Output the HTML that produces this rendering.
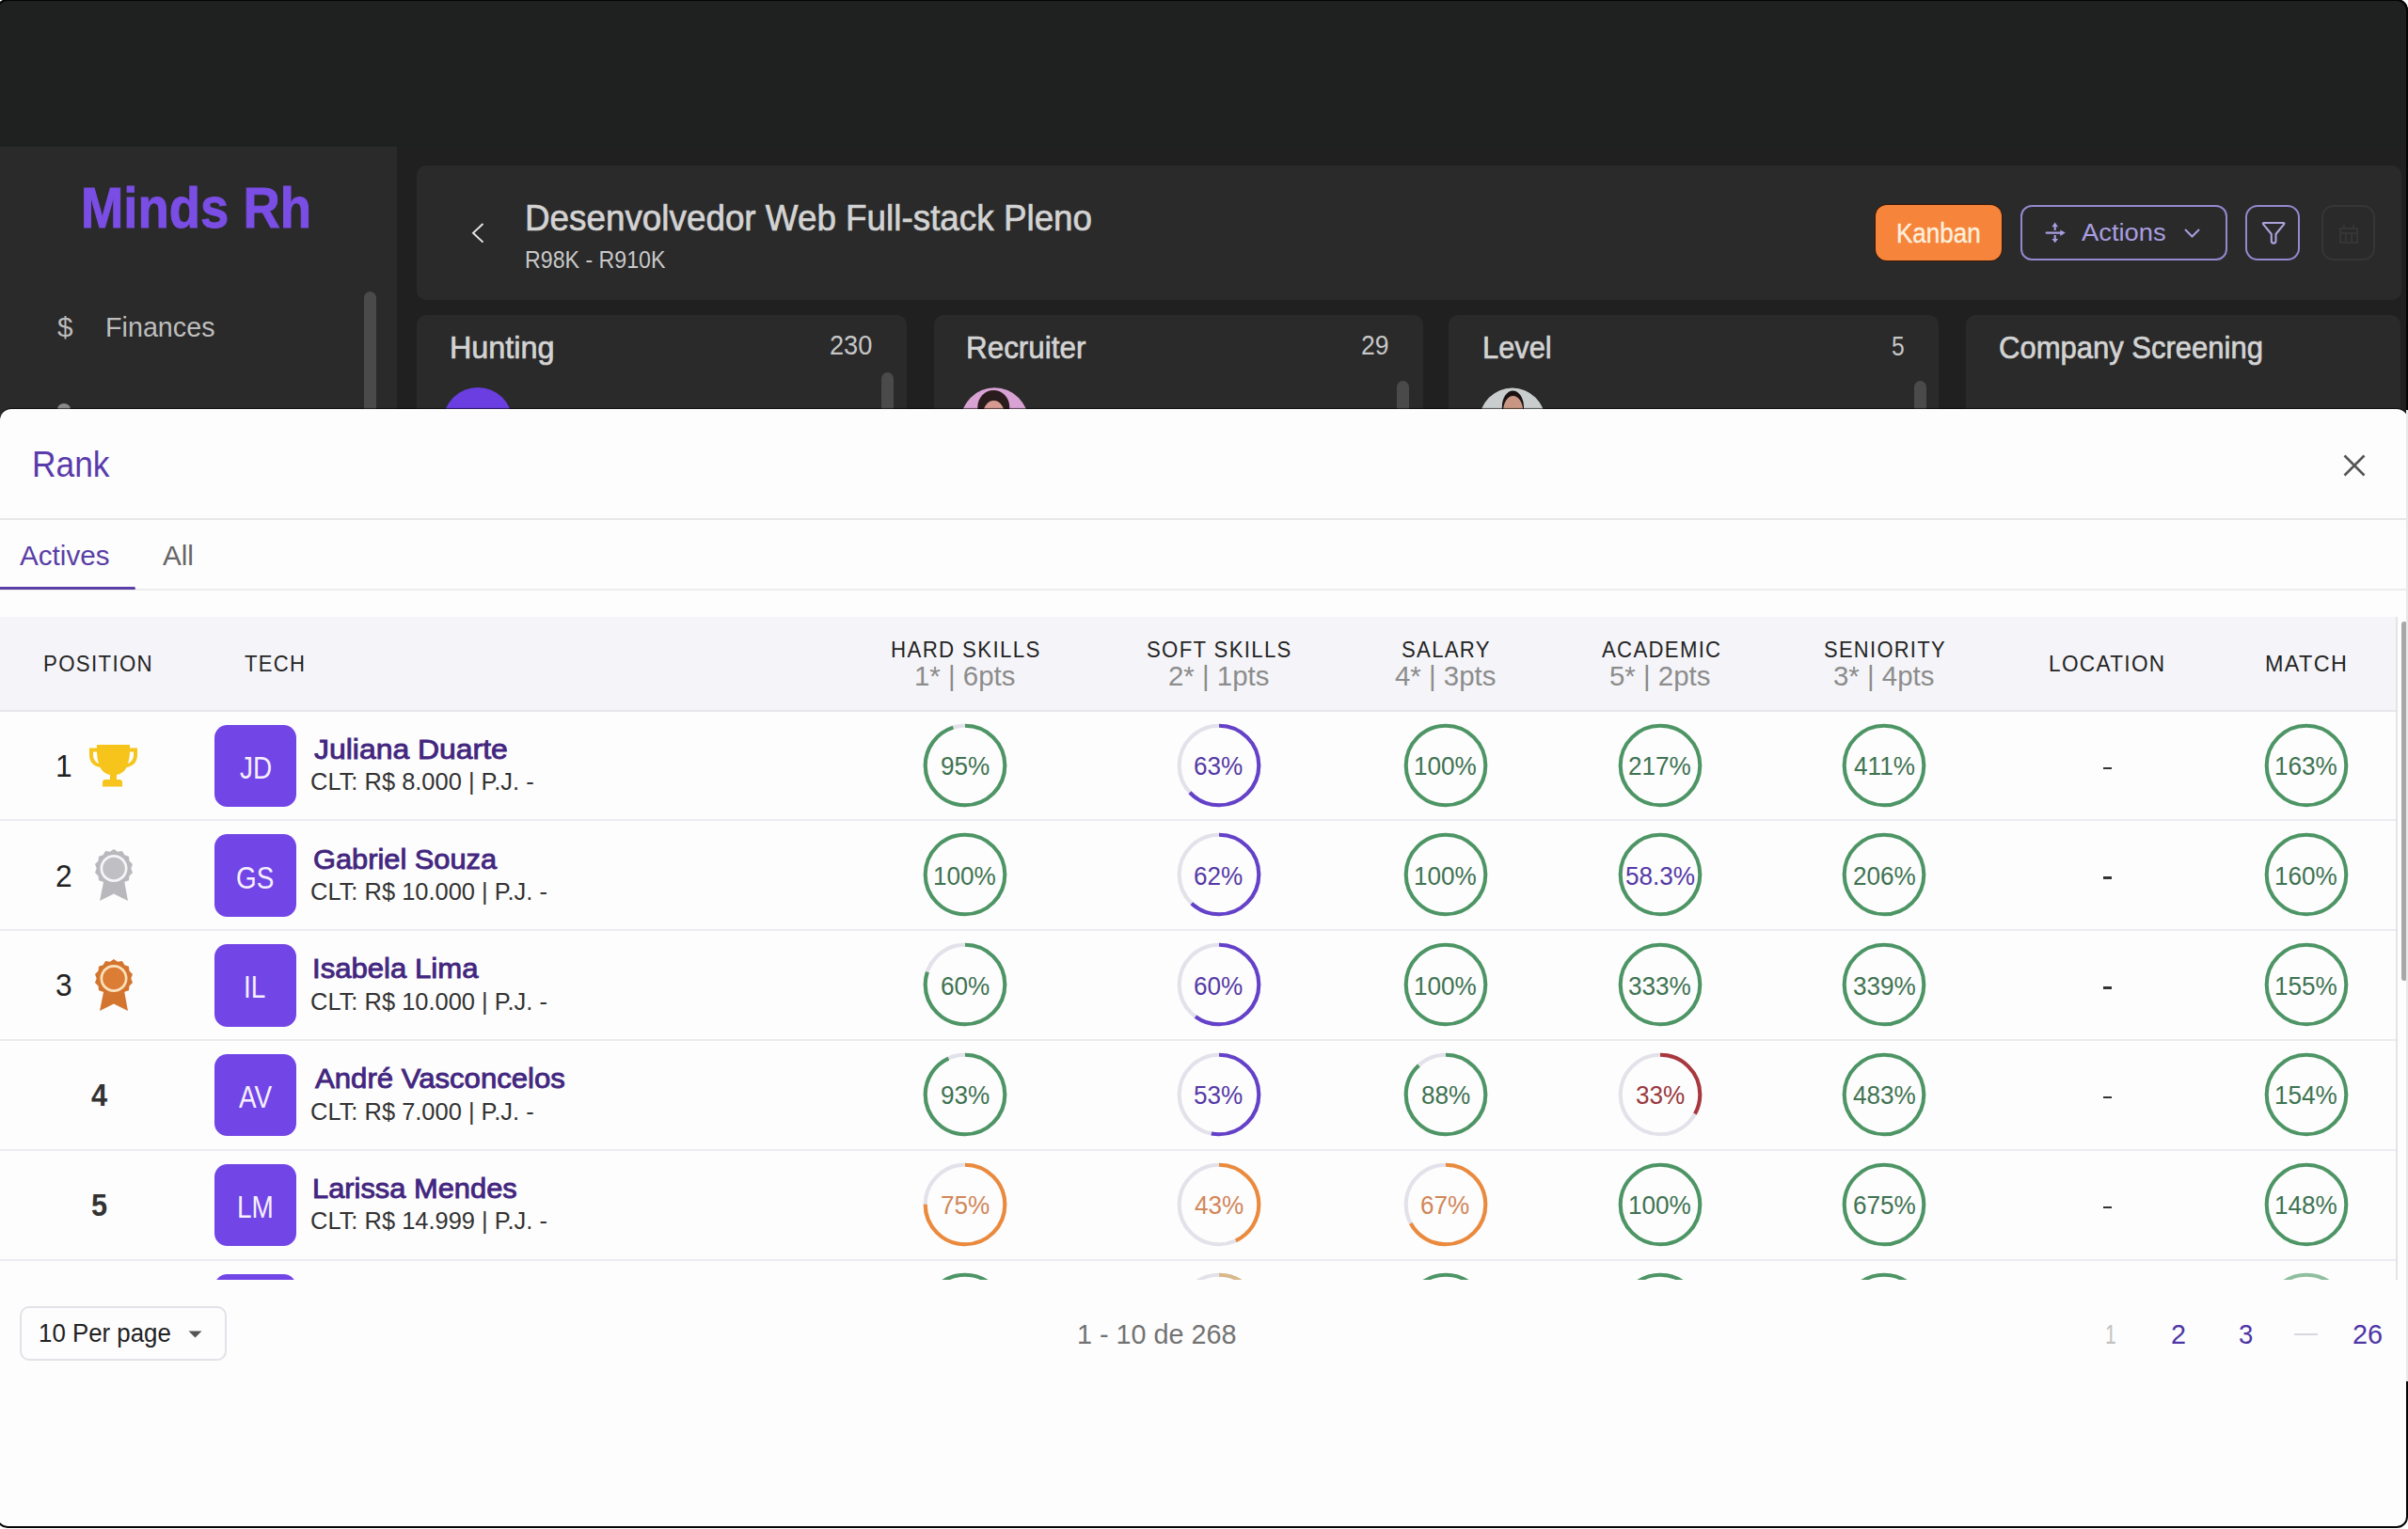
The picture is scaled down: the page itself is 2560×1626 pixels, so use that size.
<!DOCTYPE html>
<html><head><meta charset="utf-8">
<style>
*{margin:0;padding:0;box-sizing:border-box}
html,body{width:2560px;height:1626px;overflow:hidden;background:#1f2020;font-family:"Liberation Sans", sans-serif}
.t{position:absolute;line-height:1;white-space:nowrap;transform-origin:0 0}
.abs{position:absolute}
</style></head><body>
<div class="abs" style="left:422px;top:156px;width:2138px;height:300px;background:#202020"></div>
<div class="abs" style="left:0;top:156px;width:422px;height:300px;background:#2a2a2a"></div>
<div class="t" style="left:85.51px;top:190.57px;font-size:60.5px;color:#7a4de4;font-weight:bold;transform:scaleX(0.9003);-webkit-text-stroke:1.0px #7a4de4;">Minds Rh</div>
<div class="t" style="left:60.90px;top:332.63px;font-size:30.2px;color:#bdbdbd;font-weight:normal;transform:scaleX(0.9871);">$</div>
<div class="t" style="left:112.10px;top:332.63px;font-size:30.2px;color:#bdbdbd;font-weight:normal;transform:scaleX(0.9510);">Finances</div>
<div class="abs" style="left:387px;top:310px;width:13px;height:140px;border-radius:7px;background:#4a4a4a"></div>
<div class="abs" style="left:443px;top:176px;width:2110px;height:143px;border-radius:10px;background:#2a2a2a"></div>
<svg class="abs" style="left:498px;top:234px" width="20" height="28" viewBox="0 0 20 28"><path d="M15.5 4 L5 13.8 L15.5 23.6" fill="none" stroke="#e6e6e6" stroke-width="1.9"/></svg>
<div class="t" style="left:557.69px;top:213.43px;font-size:38px;color:#d3d3d3;font-weight:normal;transform:scaleX(0.9690);-webkit-text-stroke:0.7px #d3d3d3;">Desenvolvedor Web Full-stack Pleno</div>
<div class="t" style="left:557.65px;top:262.63px;font-size:26.3px;color:#c8c8c8;font-weight:normal;transform:scaleX(0.8813);">R98K - R910K</div>
<div class="abs" style="left:1994px;top:218px;width:134px;height:59px;border-radius:12px;background:#f6843b;box-shadow:0 0 0 1px #3a1a08"></div>
<div class="t" style="left:2016.40px;top:233.98px;font-size:28.6px;color:#fdf0dc;font-weight:normal;transform:scaleX(0.9105);-webkit-text-stroke:0.4px #fdf0dc;">Kanban</div>
<div class="abs" style="left:2148px;top:218px;width:220px;height:59px;border-radius:12px;border:2.3px solid #9289cf"></div>
<div class="t" style="left:2213.30px;top:234.48px;font-size:26.6px;color:#a99de0;font-weight:normal;transform:scaleX(1.0288);">Actions</div>
<svg class="abs" style="left:2170px;top:232px" width="30" height="30" viewBox="2170 232 30 30"><g fill="#a99de0"><path d="M2175.6 247.6H2191.5" stroke="#a99de0" stroke-width="2.1" stroke-linecap="round"/><polygon points="2190.3,244.4 2195.8,247.6 2190.3,250.9"/><path d="M2184.7 240.3V245.1M2184.7 250.1V254.6" stroke="#a99de0" stroke-width="2.1"/><polygon points="2181.4,241.2 2184.7,236.6 2188,241.2"/><polygon points="2181.4,253.9 2184.7,258.3 2188.1,253.9"/></g></svg>
<svg class="abs" style="left:2321px;top:242px" width="19" height="12" viewBox="0 0 19 12"><path d="M2 2L9.5 9.5L17 2" fill="none" stroke="#a99de0" stroke-width="2"/></svg>
<div class="abs" style="left:2387px;top:218px;width:58px;height:59px;border-radius:13px;border:2.3px solid #9289cf"></div>
<svg class="abs" style="left:2400px;top:230px" width="34" height="34" viewBox="2400 230 34 34"><path d="M2407 237H2427.3Q2429.3 237 2428 238.7L2419.5 249V256.3Q2419.5 258.6 2417.15 258.6Q2414.8 258.6 2414.8 256.3V249L2406.3 238.7Q2405 237 2407 237Z" fill="none" stroke="#ada2dc" stroke-width="2.1" stroke-linejoin="round"/></svg>
<div class="abs" style="left:2468px;top:218px;width:57px;height:59px;border-radius:13px;border:2px solid #363636"></div>
<svg class="abs" style="left:2486px;top:237px" width="22" height="23" viewBox="0 0 22 23"><g fill="none" stroke="#353535" stroke-width="2"><rect x="2" y="6" width="18" height="15"/><path d="M2 11H20M8 11V21M14 11V21M6 2V6M16 2V6"/></g></svg>
<div class="abs" style="left:443px;top:335px;width:521px;height:200px;border-radius:10px;background:#2a2a2a"></div>
<div class="abs" style="left:993px;top:335px;width:520px;height:200px;border-radius:10px;background:#2a2a2a"></div>
<div class="abs" style="left:1540px;top:335px;width:521px;height:200px;border-radius:10px;background:#2a2a2a"></div>
<div class="abs" style="left:2090px;top:335px;width:462px;height:200px;border-radius:10px;background:#2a2a2a"></div>
<div class="t" style="left:478.05px;top:352.80px;font-size:33.3px;color:#d3d3d3;font-weight:normal;transform:scaleX(0.9712);-webkit-text-stroke:0.7px #d3d3d3;">Hunting</div>
<div class="t" style="left:882.14px;top:353.35px;font-size:29px;color:#c6c6c6;font-weight:normal;transform:scaleX(0.9363);">230</div>
<div class="t" style="left:1026.82px;top:352.90px;font-size:33.3px;color:#d3d3d3;font-weight:normal;transform:scaleX(0.9429);-webkit-text-stroke:0.7px #d3d3d3;">Recruiter</div>
<div class="t" style="left:1446.67px;top:353.45px;font-size:29px;color:#c6c6c6;font-weight:normal;transform:scaleX(0.9173);">29</div>
<div class="t" style="left:1576.06px;top:352.70px;font-size:33.3px;color:#d3d3d3;font-weight:normal;transform:scaleX(0.9250);-webkit-text-stroke:0.7px #d3d3d3;">Level</div>
<div class="t" style="left:2011.41px;top:353.75px;font-size:29px;color:#c6c6c6;font-weight:normal;transform:scaleX(0.8494);">5</div>
<div class="t" style="left:2125.48px;top:352.80px;font-size:33.3px;color:#d3d3d3;font-weight:normal;transform:scaleX(0.9314);-webkit-text-stroke:0.7px #d3d3d3;">Company Screening</div>
<div class="abs" style="left:937px;top:396px;width:13px;height:60px;border-radius:7px;background:#4a4a4a"></div>
<div class="abs" style="left:1485px;top:405px;width:13px;height:60px;border-radius:7px;background:#4a4a4a"></div>
<div class="abs" style="left:2035px;top:405px;width:13px;height:60px;border-radius:7px;background:#4a4a4a"></div>
<div class="abs" style="left:471px;top:412px;width:74px;height:74px;border-radius:50%;background:#6a3ee0"></div>
<svg class="abs" style="left:1020px;top:411px" width="76" height="76" viewBox="1020 411 76 76"><defs><clipPath id="ca"><circle cx="1057.35" cy="448.45" r="36.15"/></clipPath></defs><circle cx="1057.35" cy="448.45" r="36.15" fill="#d9a2d5"/><g clip-path="url(#ca)"><ellipse cx="1056.3" cy="433" rx="17" ry="18" fill="#2a1c1c"/><ellipse cx="1056.5" cy="441" rx="11.5" ry="15" fill="#d69a92"/></g></svg>
<svg class="abs" style="left:1571px;top:411px" width="74" height="74" viewBox="1571 411 74 74"><defs><clipPath id="cb"><circle cx="1607.75" cy="447.5" r="35"/></clipPath></defs><circle cx="1607.75" cy="447.5" r="35" fill="#c9cdcd"/><g clip-path="url(#cb)"><ellipse cx="1608.4" cy="433" rx="11.6" ry="17.6" fill="#1a1212"/><ellipse cx="1608.6" cy="437.5" rx="10.6" ry="16.5" fill="#c99684"/></g></svg>
<div class="abs" style="left:61px;top:429px;width:14px;height:12px;border-radius:50% 50% 0 0;background:#8a8a8a"></div>
<div class="abs" style="left:0;top:435px;width:2560px;height:1191px;border-radius:12px 12px 0 0;background:#fdfdfd;box-shadow:0 -1px 1px rgba(0,0,0,0.6)"></div>
<div class="t" style="left:34.37px;top:473.79px;font-size:39.1px;color:#5a3bab;font-weight:normal;transform:scaleX(0.9039);">Rank</div>
<svg class="abs" style="left:2488px;top:480px" width="30" height="30" viewBox="0 0 30 30"><path d="M4.5 4.5L25.5 25.5M25.5 4.5L4.5 25.5" stroke="#555" stroke-width="2.6"/></svg>
<div class="abs" style="left:0;top:551px;width:2559px;height:2px;background:#e8e8e8"></div>
<div class="t" style="left:20.50px;top:574.56px;font-size:30.4px;color:#5a3fa6;font-weight:normal;transform:scaleX(0.9755);">Actives</div>
<div class="t" style="left:173.00px;top:574.56px;font-size:30.4px;color:#666666;font-weight:normal;transform:scaleX(0.9758);">All</div>
<div class="abs" style="left:0;top:626px;width:2559px;height:2px;background:#ececec"></div>
<div class="abs" style="left:0;top:623.5px;width:143.5px;height:3.5px;border-radius:0 2px 2px 0;background:#5b3fa6"></div>
<div class="abs" style="left:0;top:656px;width:2547px;height:100px;background:#f5f5f9"></div>
<div class="abs" style="left:0;top:755px;width:2547px;height:2px;background:#e6e6ec"></div>
<div class="t" style="left:45.62px;top:693.88px;font-size:24px;color:#242424;font-weight:normal;transform:scaleX(0.9290);letter-spacing:1.4px;">POSITION</div>
<div class="t" style="left:259.96px;top:693.88px;font-size:24px;color:#242424;font-weight:normal;transform:scaleX(0.9213);letter-spacing:1.4px;">TECH</div>
<div class="t" style="left:946.71px;top:679.52px;font-size:23.6px;color:#242424;font-weight:normal;transform:scaleX(0.9456);letter-spacing:1.4px;">HARD SKILLS</div>
<div class="t" style="left:971.67px;top:704.93px;font-size:28.9px;color:#8c8c8c;font-weight:normal;transform:scaleX(1.0190);">1* | 6pts</div>
<div class="t" style="left:1218.60px;top:679.52px;font-size:23.6px;color:#242424;font-weight:normal;transform:scaleX(0.9409);letter-spacing:1.4px;">SOFT SKILLS</div>
<div class="t" style="left:1241.53px;top:704.93px;font-size:28.9px;color:#8c8c8c;font-weight:normal;transform:scaleX(1.0190);">2* | 1pts</div>
<div class="t" style="left:1489.70px;top:679.52px;font-size:23.6px;color:#242424;font-weight:normal;transform:scaleX(0.9379);letter-spacing:1.4px;">SALARY</div>
<div class="t" style="left:1483.28px;top:704.93px;font-size:28.9px;color:#8c8c8c;font-weight:normal;transform:scaleX(1.0190);">4* | 3pts</div>
<div class="t" style="left:1702.70px;top:679.52px;font-size:23.6px;color:#242424;font-weight:normal;transform:scaleX(0.9388);letter-spacing:1.4px;">ACADEMIC</div>
<div class="t" style="left:1711.18px;top:704.93px;font-size:28.9px;color:#8c8c8c;font-weight:normal;transform:scaleX(1.0190);">5* | 2pts</div>
<div class="t" style="left:1938.51px;top:679.52px;font-size:23.6px;color:#242424;font-weight:normal;transform:scaleX(0.9293);letter-spacing:1.4px;">SENIORITY</div>
<div class="t" style="left:1949.38px;top:704.93px;font-size:28.9px;color:#8c8c8c;font-weight:normal;transform:scaleX(1.0190);">3* | 4pts</div>
<div class="t" style="left:2178.19px;top:693.88px;font-size:24px;color:#242424;font-weight:normal;transform:scaleX(0.9424);letter-spacing:1.4px;">LOCATION</div>
<div class="t" style="left:2408.13px;top:693.88px;font-size:24px;color:#242424;font-weight:normal;transform:scaleX(0.9733);letter-spacing:1.4px;">MATCH</div>
<div class="abs" style="left:0;top:871.3px;width:2547px;height:2px;background:#ebebf0"></div>
<div class="t" style="left:58.72px;top:797.72px;font-size:33.4px;color:#222222;font-weight:normal;transform:scaleX(0.9500);">1</div>
<svg class="abs" style="left:94px;top:792px" width="53" height="45" viewBox="0 0 53 45"><path d="M9 0H44V3.5H52V11C52 18.5 47 23 40.5 24C38.5 28.5 34.5 31 30 32V37H33C35 37 36 38.5 36 40.5V44.5H15V40.5C15 38.5 16 37 18 37H23V32C18.5 31 14.5 28.5 12.5 24C6 23 1 18.5 1 11V3.5H9Z M5 7.5V11C5 15.5 8 19 11 20C9.8 16.5 9.2 12.5 9 7.5Z M48 7.5H44C43.8 12.5 43.2 16.5 42 20C45 19 48 15.5 48 11Z" fill="#f6c41a" fill-rule="evenodd"/></svg>
<div class="abs" style="left:227.5px;top:770.5px;width:87.5px;height:87.5px;border-radius:13.5px;background:#7246e6"></div>
<div class="t" style="left:254.61px;top:798.81px;font-size:34px;color:#f6f0ff;font-weight:normal;transform:scaleX(0.8200);">JD</div>
<div class="t" style="left:334.39px;top:780.86px;font-size:30.4px;color:#43267f;font-weight:normal;transform:scaleX(1.0502);-webkit-text-stroke:0.9px #43267f;">Juliana Duarte</div>
<div class="t" style="left:330.13px;top:818.12px;font-size:26.2px;color:#333333;font-weight:normal;transform:scaleX(0.9720);">CLT: R$ 8.000 | P.J. -</div>
<svg class="abs" style="left:976.0px;top:763.5px" width="100" height="100" viewBox="0 0 100 100"><circle cx="50" cy="50" r="42.3" fill="none" stroke="#e3e1ea" stroke-width="4.1"/><circle cx="50" cy="50" r="42.3" fill="none" stroke="#4d9565" stroke-width="4.1" stroke-dasharray="252.49 265.78" transform="rotate(-90 50 50)"/></svg>
<div class="t" style="left:999.73px;top:799.97px;font-size:28.5px;color:#3f7352;font-weight:normal;transform:scaleX(0.9170);">95%</div>
<svg class="abs" style="left:1245.5px;top:763.5px" width="100" height="100" viewBox="0 0 100 100"><circle cx="50" cy="50" r="42.3" fill="none" stroke="#e3e1ea" stroke-width="4.1"/><circle cx="50" cy="50" r="42.3" fill="none" stroke="#6441c9" stroke-width="4.1" stroke-dasharray="167.44 265.78" transform="rotate(-90 50 50)"/></svg>
<div class="t" style="left:1269.17px;top:799.97px;font-size:28.5px;color:#553aa6;font-weight:normal;transform:scaleX(0.9170);">63%</div>
<svg class="abs" style="left:1486.8px;top:763.5px" width="100" height="100" viewBox="0 0 100 100"><circle cx="50" cy="50" r="42.3" fill="none" stroke="#4d9565" stroke-width="4.1"/></svg>
<div class="t" style="left:1502.83px;top:799.97px;font-size:28.5px;color:#3f7352;font-weight:normal;transform:scaleX(0.9170);">100%</div>
<svg class="abs" style="left:1715.0px;top:763.5px" width="100" height="100" viewBox="0 0 100 100"><circle cx="50" cy="50" r="42.3" fill="none" stroke="#4d9565" stroke-width="4.1"/></svg>
<div class="t" style="left:1731.35px;top:799.97px;font-size:28.5px;color:#3f7352;font-weight:normal;transform:scaleX(0.9170);">217%</div>
<svg class="abs" style="left:1953.2px;top:763.5px" width="100" height="100" viewBox="0 0 100 100"><circle cx="50" cy="50" r="42.3" fill="none" stroke="#4d9565" stroke-width="4.1"/></svg>
<div class="t" style="left:1970.92px;top:799.97px;font-size:28.5px;color:#3f7352;font-weight:normal;transform:scaleX(0.9170);">411%</div>
<div class="abs" style="left:2235.7px;top:815.5px;width:9px;height:2.5px;background:#333"></div>
<svg class="abs" style="left:2401.8px;top:763.5px" width="100" height="100" viewBox="0 0 100 100"><circle cx="50" cy="50" r="42.3" fill="none" stroke="#4d9565" stroke-width="4.1"/></svg>
<div class="t" style="left:2417.83px;top:799.97px;font-size:28.5px;color:#3f7352;font-weight:normal;transform:scaleX(0.9170);">163%</div>
<div class="abs" style="left:0;top:988.1px;width:2547px;height:2px;background:#ebebf0"></div>
<div class="t" style="left:59.19px;top:914.52px;font-size:33.4px;color:#222222;font-weight:normal;transform:scaleX(0.9500);">2</div>
<svg class="abs" style="left:99.5px;top:902.9px" width="42" height="56" viewBox="0 0 42 56"><path d="M11.5 28L31 28L36 55L21 47.5L6 55Z" fill="#b9b9bd"/><polygon points="21.0,0.0 25.1,2.7 29.9,2.0 32.4,6.2 37.0,7.7 37.5,12.6 41.0,15.9 39.3,20.5 41.0,25.1 37.5,28.4 37.0,33.3 32.4,34.8 29.9,39.0 25.1,38.3 21.0,41.0 16.9,38.3 12.1,39.0 9.6,34.8 5.0,33.3 4.5,28.4 1.0,25.1 2.7,20.5 1.0,15.9 4.5,12.6 5.0,7.7 9.6,6.2 12.1,2.0 16.9,2.7" fill="#b9b9bd"/><circle cx="21" cy="20.5" r="14.5" fill="#f6f6f6"/><circle cx="21" cy="20.5" r="11.8" fill="#c0c0c4"/></svg>
<div class="abs" style="left:227.5px;top:887.3px;width:87.5px;height:87.5px;border-radius:13.5px;background:#7246e6"></div>
<div class="t" style="left:250.99px;top:915.61px;font-size:34px;color:#f6f0ff;font-weight:normal;transform:scaleX(0.8200);">GS</div>
<div class="t" style="left:333.32px;top:897.66px;font-size:30.4px;color:#43267f;font-weight:normal;transform:scaleX(1.0132);-webkit-text-stroke:0.9px #43267f;">Gabriel Souza</div>
<div class="t" style="left:330.13px;top:934.92px;font-size:26.2px;color:#333333;font-weight:normal;transform:scaleX(0.9720);">CLT: R$ 10.000 | P.J. -</div>
<svg class="abs" style="left:976.0px;top:880.3px" width="100" height="100" viewBox="0 0 100 100"><circle cx="50" cy="50" r="42.3" fill="none" stroke="#4d9565" stroke-width="4.1"/></svg>
<div class="t" style="left:992.03px;top:916.77px;font-size:28.5px;color:#3f7352;font-weight:normal;transform:scaleX(0.9170);">100%</div>
<svg class="abs" style="left:1245.5px;top:880.3px" width="100" height="100" viewBox="0 0 100 100"><circle cx="50" cy="50" r="42.3" fill="none" stroke="#e3e1ea" stroke-width="4.1"/><circle cx="50" cy="50" r="42.3" fill="none" stroke="#6441c9" stroke-width="4.1" stroke-dasharray="164.78 265.78" transform="rotate(-90 50 50)"/></svg>
<div class="t" style="left:1269.17px;top:916.77px;font-size:28.5px;color:#553aa6;font-weight:normal;transform:scaleX(0.9170);">62%</div>
<svg class="abs" style="left:1486.8px;top:880.3px" width="100" height="100" viewBox="0 0 100 100"><circle cx="50" cy="50" r="42.3" fill="none" stroke="#4d9565" stroke-width="4.1"/></svg>
<div class="t" style="left:1502.83px;top:916.77px;font-size:28.5px;color:#3f7352;font-weight:normal;transform:scaleX(0.9170);">100%</div>
<svg class="abs" style="left:1715.0px;top:880.3px" width="100" height="100" viewBox="0 0 100 100"><circle cx="50" cy="50" r="42.3" fill="none" stroke="#4d9565" stroke-width="4.1"/></svg>
<div class="t" style="left:1727.89px;top:916.77px;font-size:28.5px;color:#553aa6;font-weight:normal;transform:scaleX(0.9170);">58.3%</div>
<svg class="abs" style="left:1953.2px;top:880.3px" width="100" height="100" viewBox="0 0 100 100"><circle cx="50" cy="50" r="42.3" fill="none" stroke="#4d9565" stroke-width="4.1"/></svg>
<div class="t" style="left:1969.55px;top:916.77px;font-size:28.5px;color:#3f7352;font-weight:normal;transform:scaleX(0.9170);">206%</div>
<div class="abs" style="left:2235.7px;top:932.3px;width:9px;height:2.5px;background:#333"></div>
<svg class="abs" style="left:2401.8px;top:880.3px" width="100" height="100" viewBox="0 0 100 100"><circle cx="50" cy="50" r="42.3" fill="none" stroke="#4d9565" stroke-width="4.1"/></svg>
<div class="t" style="left:2417.83px;top:916.77px;font-size:28.5px;color:#3f7352;font-weight:normal;transform:scaleX(0.9170);">160%</div>
<div class="abs" style="left:0;top:1104.9px;width:2547px;height:2px;background:#ebebf0"></div>
<div class="t" style="left:59.19px;top:1031.32px;font-size:33.4px;color:#222222;font-weight:normal;transform:scaleX(0.9500);">3</div>
<svg class="abs" style="left:99.5px;top:1019.7px" width="42" height="56" viewBox="0 0 42 56"><path d="M11.5 28L31 28L36 55L21 47.5L6 55Z" fill="#d4752f"/><polygon points="21.0,0.0 25.1,2.7 29.9,2.0 32.4,6.2 37.0,7.7 37.5,12.6 41.0,15.9 39.3,20.5 41.0,25.1 37.5,28.4 37.0,33.3 32.4,34.8 29.9,39.0 25.1,38.3 21.0,41.0 16.9,38.3 12.1,39.0 9.6,34.8 5.0,33.3 4.5,28.4 1.0,25.1 2.7,20.5 1.0,15.9 4.5,12.6 5.0,7.7 9.6,6.2 12.1,2.0 16.9,2.7" fill="#d4752f"/><circle cx="21" cy="20.5" r="14.5" fill="#fbe2bd"/><circle cx="21" cy="20.5" r="11.8" fill="#dc7d36"/></svg>
<div class="abs" style="left:227.5px;top:1004.1px;width:87.5px;height:87.5px;border-radius:13.5px;background:#7246e6"></div>
<div class="t" style="left:258.72px;top:1032.41px;font-size:34px;color:#f6f0ff;font-weight:normal;transform:scaleX(0.8200);">IL</div>
<div class="t" style="left:332.06px;top:1014.46px;font-size:30.4px;color:#43267f;font-weight:normal;transform:scaleX(1.0239);-webkit-text-stroke:0.9px #43267f;">Isabela Lima</div>
<div class="t" style="left:330.13px;top:1051.72px;font-size:26.2px;color:#333333;font-weight:normal;transform:scaleX(0.9720);">CLT: R$ 10.000 | P.J. -</div>
<svg class="abs" style="left:976.0px;top:997.1px" width="100" height="100" viewBox="0 0 100 100"><circle cx="50" cy="50" r="42.3" fill="none" stroke="#e3e1ea" stroke-width="4.1"/><circle cx="50" cy="50" r="42.3" fill="none" stroke="#4d9565" stroke-width="4.1" stroke-dasharray="212.62 265.78" transform="rotate(-90 50 50)"/></svg>
<div class="t" style="left:999.67px;top:1033.57px;font-size:28.5px;color:#3f7352;font-weight:normal;transform:scaleX(0.9170);">60%</div>
<svg class="abs" style="left:1245.5px;top:997.1px" width="100" height="100" viewBox="0 0 100 100"><circle cx="50" cy="50" r="42.3" fill="none" stroke="#e3e1ea" stroke-width="4.1"/><circle cx="50" cy="50" r="42.3" fill="none" stroke="#6441c9" stroke-width="4.1" stroke-dasharray="159.47 265.78" transform="rotate(-90 50 50)"/></svg>
<div class="t" style="left:1269.17px;top:1033.57px;font-size:28.5px;color:#553aa6;font-weight:normal;transform:scaleX(0.9170);">60%</div>
<svg class="abs" style="left:1486.8px;top:997.1px" width="100" height="100" viewBox="0 0 100 100"><circle cx="50" cy="50" r="42.3" fill="none" stroke="#4d9565" stroke-width="4.1"/></svg>
<div class="t" style="left:1502.83px;top:1033.57px;font-size:28.5px;color:#3f7352;font-weight:normal;transform:scaleX(0.9170);">100%</div>
<svg class="abs" style="left:1715.0px;top:997.1px" width="100" height="100" viewBox="0 0 100 100"><circle cx="50" cy="50" r="42.3" fill="none" stroke="#4d9565" stroke-width="4.1"/></svg>
<div class="t" style="left:1731.48px;top:1033.57px;font-size:28.5px;color:#3f7352;font-weight:normal;transform:scaleX(0.9170);">333%</div>
<svg class="abs" style="left:1953.2px;top:997.1px" width="100" height="100" viewBox="0 0 100 100"><circle cx="50" cy="50" r="42.3" fill="none" stroke="#4d9565" stroke-width="4.1"/></svg>
<div class="t" style="left:1969.68px;top:1033.57px;font-size:28.5px;color:#3f7352;font-weight:normal;transform:scaleX(0.9170);">339%</div>
<div class="abs" style="left:2235.7px;top:1049.1px;width:9px;height:2.5px;background:#333"></div>
<svg class="abs" style="left:2401.8px;top:997.1px" width="100" height="100" viewBox="0 0 100 100"><circle cx="50" cy="50" r="42.3" fill="none" stroke="#4d9565" stroke-width="4.1"/></svg>
<div class="t" style="left:2417.83px;top:1033.57px;font-size:28.5px;color:#3f7352;font-weight:normal;transform:scaleX(0.9170);">155%</div>
<div class="abs" style="left:0;top:1221.7px;width:2547px;height:2px;background:#ebebf0"></div>
<div class="t" style="left:96.92px;top:1148.12px;font-size:33.4px;color:#333333;font-weight:bold;transform:scaleX(0.9200);">4</div>
<div class="abs" style="left:227.5px;top:1120.9px;width:87.5px;height:87.5px;border-radius:13.5px;background:#7246e6"></div>
<div class="t" style="left:253.71px;top:1149.21px;font-size:34px;color:#f6f0ff;font-weight:normal;transform:scaleX(0.8200);">AV</div>
<div class="t" style="left:334.86px;top:1131.26px;font-size:30.4px;color:#43267f;font-weight:normal;transform:scaleX(1.0241);-webkit-text-stroke:0.9px #43267f;">André Vasconcelos</div>
<div class="t" style="left:330.13px;top:1168.52px;font-size:26.2px;color:#333333;font-weight:normal;transform:scaleX(0.9720);">CLT: R$ 7.000 | P.J. -</div>
<svg class="abs" style="left:976.0px;top:1113.9px" width="100" height="100" viewBox="0 0 100 100"><circle cx="50" cy="50" r="42.3" fill="none" stroke="#e3e1ea" stroke-width="4.1"/><circle cx="50" cy="50" r="42.3" fill="none" stroke="#4d9565" stroke-width="4.1" stroke-dasharray="247.17 265.78" transform="rotate(-90 50 50)"/></svg>
<div class="t" style="left:999.73px;top:1150.37px;font-size:28.5px;color:#3f7352;font-weight:normal;transform:scaleX(0.9170);">93%</div>
<svg class="abs" style="left:1245.5px;top:1113.9px" width="100" height="100" viewBox="0 0 100 100"><circle cx="50" cy="50" r="42.3" fill="none" stroke="#e3e1ea" stroke-width="4.1"/><circle cx="50" cy="50" r="42.3" fill="none" stroke="#6441c9" stroke-width="4.1" stroke-dasharray="140.86 265.78" transform="rotate(-90 50 50)"/></svg>
<div class="t" style="left:1269.30px;top:1150.37px;font-size:28.5px;color:#553aa6;font-weight:normal;transform:scaleX(0.9170);">53%</div>
<svg class="abs" style="left:1486.8px;top:1113.9px" width="100" height="100" viewBox="0 0 100 100"><circle cx="50" cy="50" r="42.3" fill="none" stroke="#e3e1ea" stroke-width="4.1"/><circle cx="50" cy="50" r="42.3" fill="none" stroke="#4d9565" stroke-width="4.1" stroke-dasharray="233.89 265.78" transform="rotate(-90 50 50)"/></svg>
<div class="t" style="left:1510.53px;top:1150.37px;font-size:28.5px;color:#3f7352;font-weight:normal;transform:scaleX(0.9170);">88%</div>
<svg class="abs" style="left:1715.0px;top:1113.9px" width="100" height="100" viewBox="0 0 100 100"><circle cx="50" cy="50" r="42.3" fill="none" stroke="#e3e1ea" stroke-width="4.1"/><circle cx="50" cy="50" r="42.3" fill="none" stroke="#a8383e" stroke-width="4.1" stroke-dasharray="87.71 265.78" transform="rotate(-90 50 50)"/></svg>
<div class="t" style="left:1738.80px;top:1150.37px;font-size:28.5px;color:#9a3a40;font-weight:normal;transform:scaleX(0.9170);">33%</div>
<svg class="abs" style="left:1953.2px;top:1113.9px" width="100" height="100" viewBox="0 0 100 100"><circle cx="50" cy="50" r="42.3" fill="none" stroke="#4d9565" stroke-width="4.1"/></svg>
<div class="t" style="left:1969.94px;top:1150.37px;font-size:28.5px;color:#3f7352;font-weight:normal;transform:scaleX(0.9170);">483%</div>
<div class="abs" style="left:2235.7px;top:1165.9px;width:9px;height:2.5px;background:#333"></div>
<svg class="abs" style="left:2401.8px;top:1113.9px" width="100" height="100" viewBox="0 0 100 100"><circle cx="50" cy="50" r="42.3" fill="none" stroke="#4d9565" stroke-width="4.1"/></svg>
<div class="t" style="left:2417.83px;top:1150.37px;font-size:28.5px;color:#3f7352;font-weight:normal;transform:scaleX(0.9170);">154%</div>
<div class="abs" style="left:0;top:1338.5px;width:2547px;height:2px;background:#ebebf0"></div>
<div class="t" style="left:97.00px;top:1264.92px;font-size:33.4px;color:#333333;font-weight:bold;transform:scaleX(0.9200);">5</div>
<div class="abs" style="left:227.5px;top:1237.7px;width:87.5px;height:87.5px;border-radius:13.5px;background:#7246e6"></div>
<div class="t" style="left:251.89px;top:1266.01px;font-size:34px;color:#f6f0ff;font-weight:normal;transform:scaleX(0.8200);">LM</div>
<div class="t" style="left:332.39px;top:1248.06px;font-size:30.4px;color:#43267f;font-weight:normal;transform:scaleX(1.0150);-webkit-text-stroke:0.9px #43267f;">Larissa Mendes</div>
<div class="t" style="left:330.13px;top:1285.32px;font-size:26.2px;color:#333333;font-weight:normal;transform:scaleX(0.9720);">CLT: R$ 14.999 | P.J. -</div>
<svg class="abs" style="left:976.0px;top:1230.7px" width="100" height="100" viewBox="0 0 100 100"><circle cx="50" cy="50" r="42.3" fill="none" stroke="#e3e1ea" stroke-width="4.1"/><circle cx="50" cy="50" r="42.3" fill="none" stroke="#eb8a3d" stroke-width="4.1" stroke-dasharray="199.33 265.78" transform="rotate(-90 50 50)"/></svg>
<div class="t" style="left:999.67px;top:1267.17px;font-size:28.5px;color:#d1875a;font-weight:normal;transform:scaleX(0.9170);">75%</div>
<svg class="abs" style="left:1245.5px;top:1230.7px" width="100" height="100" viewBox="0 0 100 100"><circle cx="50" cy="50" r="42.3" fill="none" stroke="#e3e1ea" stroke-width="4.1"/><circle cx="50" cy="50" r="42.3" fill="none" stroke="#eb8a3d" stroke-width="4.1" stroke-dasharray="114.28 265.78" transform="rotate(-90 50 50)"/></svg>
<div class="t" style="left:1269.56px;top:1267.17px;font-size:28.5px;color:#d1875a;font-weight:normal;transform:scaleX(0.9170);">43%</div>
<svg class="abs" style="left:1486.8px;top:1230.7px" width="100" height="100" viewBox="0 0 100 100"><circle cx="50" cy="50" r="42.3" fill="none" stroke="#e3e1ea" stroke-width="4.1"/><circle cx="50" cy="50" r="42.3" fill="none" stroke="#eb8a3d" stroke-width="4.1" stroke-dasharray="178.07 265.78" transform="rotate(-90 50 50)"/></svg>
<div class="t" style="left:1510.47px;top:1267.17px;font-size:28.5px;color:#d1875a;font-weight:normal;transform:scaleX(0.9170);">67%</div>
<svg class="abs" style="left:1715.0px;top:1230.7px" width="100" height="100" viewBox="0 0 100 100"><circle cx="50" cy="50" r="42.3" fill="none" stroke="#4d9565" stroke-width="4.1"/></svg>
<div class="t" style="left:1731.03px;top:1267.17px;font-size:28.5px;color:#3f7352;font-weight:normal;transform:scaleX(0.9170);">100%</div>
<svg class="abs" style="left:1953.2px;top:1230.7px" width="100" height="100" viewBox="0 0 100 100"><circle cx="50" cy="50" r="42.3" fill="none" stroke="#4d9565" stroke-width="4.1"/></svg>
<div class="t" style="left:1969.55px;top:1267.17px;font-size:28.5px;color:#3f7352;font-weight:normal;transform:scaleX(0.9170);">675%</div>
<div class="abs" style="left:2235.7px;top:1282.7px;width:9px;height:2.5px;background:#333"></div>
<svg class="abs" style="left:2401.8px;top:1230.7px" width="100" height="100" viewBox="0 0 100 100"><circle cx="50" cy="50" r="42.3" fill="none" stroke="#4d9565" stroke-width="4.1"/></svg>
<div class="t" style="left:2417.83px;top:1267.17px;font-size:28.5px;color:#3f7352;font-weight:normal;transform:scaleX(0.9170);">148%</div>
<div class="abs" style="left:0;top:1340.0px;width:2547px;height:21.0px;overflow:hidden"><div class="abs" style="left:227.5px;top:14.5px;width:87.5px;height:87.5px;border-radius:13.5px;background:#7246e6"></div><svg class="abs" style="left:976.0px;top:7.5px" width="100" height="100" viewBox="0 0 100 100"><circle cx="50" cy="50" r="42.3" fill="none" stroke="#4d9565" stroke-width="4.1"/></svg>
<svg class="abs" style="left:1245.5px;top:7.5px" width="100" height="100" viewBox="0 0 100 100"><circle cx="50" cy="50" r="42.3" fill="none" stroke="#e3e1ea" stroke-width="4.1"/><circle cx="50" cy="50" r="42.3" fill="none" stroke="#d9b98a" stroke-width="4.1" stroke-dasharray="106.31 265.78" transform="rotate(-90 50 50)"/></svg>
<svg class="abs" style="left:1486.8px;top:7.5px" width="100" height="100" viewBox="0 0 100 100"><circle cx="50" cy="50" r="42.3" fill="none" stroke="#4d9565" stroke-width="4.1"/></svg>
<svg class="abs" style="left:1715.0px;top:7.5px" width="100" height="100" viewBox="0 0 100 100"><circle cx="50" cy="50" r="42.3" fill="none" stroke="#4d9565" stroke-width="4.1"/></svg>
<svg class="abs" style="left:1953.2px;top:7.5px" width="100" height="100" viewBox="0 0 100 100"><circle cx="50" cy="50" r="42.3" fill="none" stroke="#4d9565" stroke-width="4.1"/></svg>
<svg class="abs" style="left:2401.8px;top:7.5px" width="100" height="100" viewBox="0 0 100 100"><circle cx="50" cy="50" r="42.3" fill="none" stroke="#8fbf9f" stroke-width="4.1"/></svg>
</div>
<div class="abs" style="left:2547px;top:656px;width:1.5px;height:705px;background:#e4e4e8"></div>
<div class="abs" style="left:2552.5px;top:661px;width:6.5px;height:382px;border-radius:4px;background:#a8a8a8"></div>
<div class="abs" style="left:21px;top:1389px;width:220px;height:58px;border-radius:10px;border:2px solid #e2e2e8"></div>
<div class="t" style="left:40.56px;top:1404.26px;font-size:27.8px;color:#222222;font-weight:normal;transform:scaleX(0.9300);">10 Per page</div>
<svg class="abs" style="left:200px;top:1415px" width="15" height="8" viewBox="0 0 15 8"><path d="M0.5 0.5H14.5L7.5 7.5Z" fill="#555"/></svg>
<div class="t" style="left:1144.54px;top:1403.77px;font-size:29.8px;color:#737373;font-weight:normal;transform:scaleX(0.9655);">1 - 10 de 268</div>
<div class="t" style="left:2238.21px;top:1404.02px;font-size:29.5px;color:#c2c2c2;font-weight:normal;transform:scaleX(0.7169);">1</div>
<div class="t" style="left:2307.66px;top:1404.02px;font-size:29.5px;color:#4e36a6;font-weight:normal;transform:scaleX(0.9760);">2</div>
<div class="t" style="left:2380.00px;top:1404.02px;font-size:29.5px;color:#4e36a6;font-weight:normal;transform:scaleX(0.9349);">3</div>
<div class="abs" style="left:2439.3px;top:1418.2px;width:25px;height:2px;background:#d8d8e0"></div>
<div class="t" style="left:2501.36px;top:1404.02px;font-size:29.5px;color:#4e36a6;font-weight:normal;transform:scaleX(0.9771);">26</div>
<div class="abs" style="left:-4px;top:-1px;width:2564px;height:1626px;border:2.5px solid #050505;border-radius:12px;box-shadow:0 0 0 30px #ffffff"></div>
<div class="abs" style="left:2557.5px;top:436px;width:3px;height:1033px;background:#e9e9e9"></div>
</body></html>
